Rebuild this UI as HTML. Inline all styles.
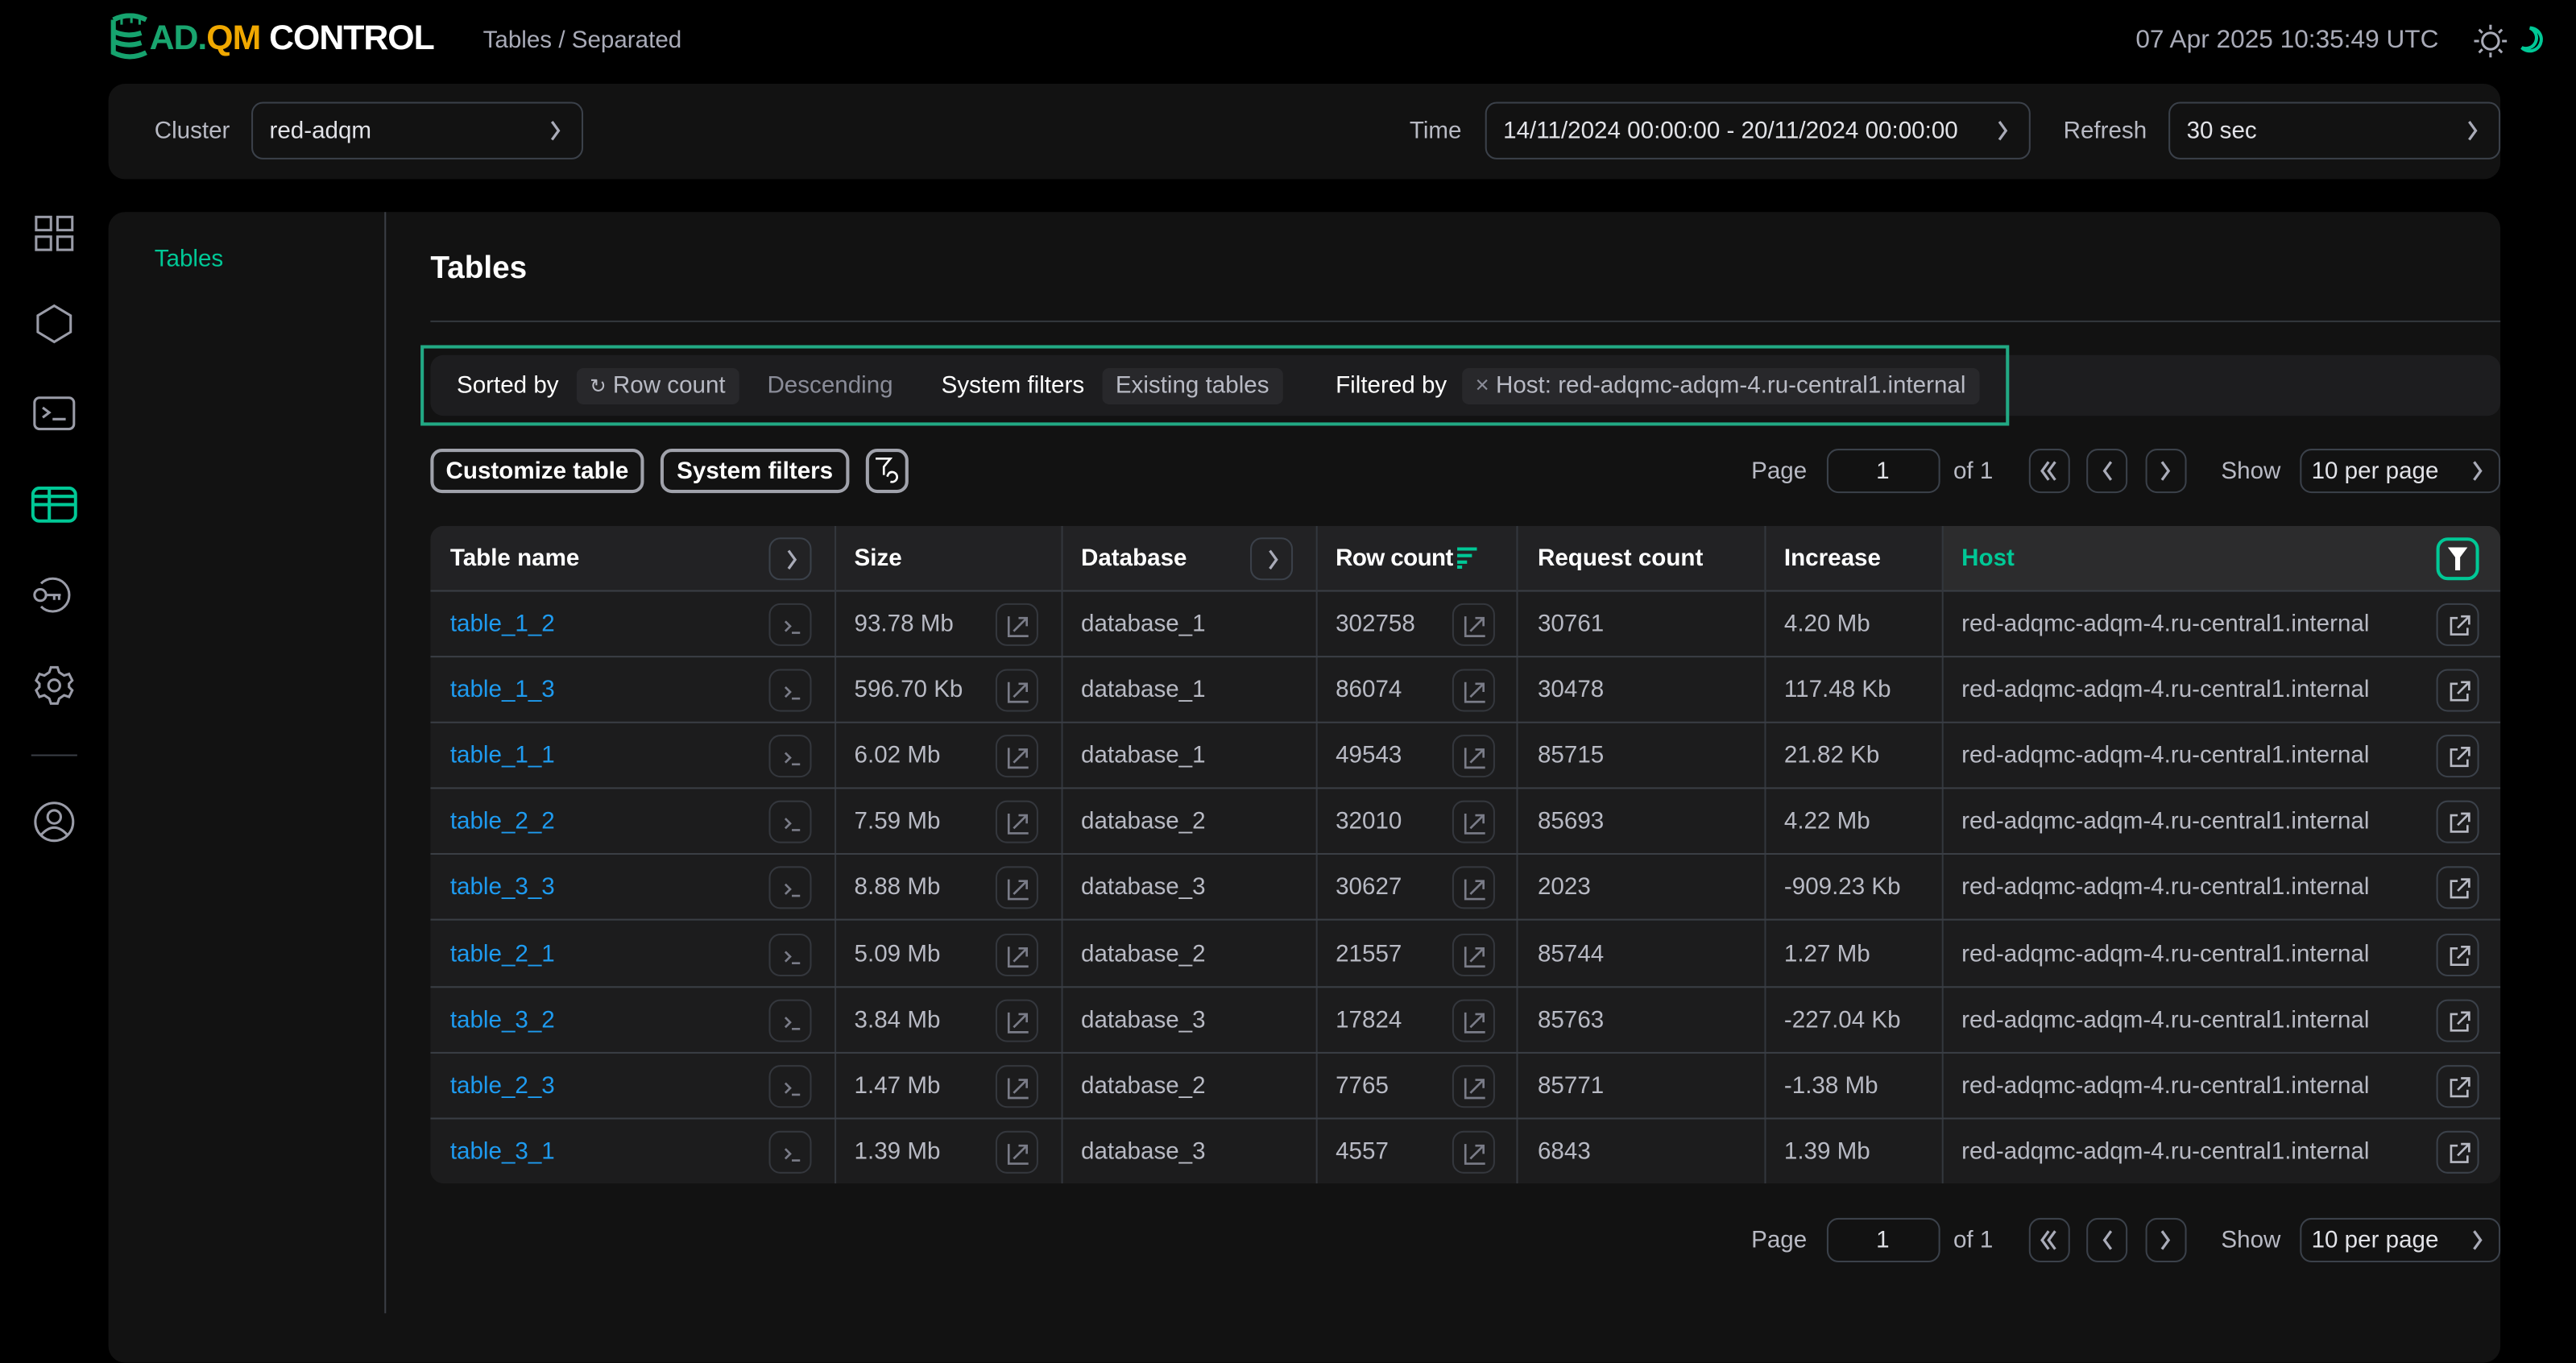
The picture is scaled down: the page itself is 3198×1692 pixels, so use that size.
<!DOCTYPE html>
<html><head><meta charset="utf-8"><style>
*{box-sizing:border-box;margin:0;padding:0}
html,body{width:3198px;height:1616px;overflow:hidden;background:#000}
#w{position:absolute;left:0;top:0;width:1568px;height:792px;transform:scale(2.0395,2.0404);transform-origin:0 0;font-family:"Liberation Sans",sans-serif;color:#b8bac4;font-size:14.5px}
.a{position:absolute}
.box{position:absolute;border:1.5px solid #3b414a;border-radius:7px}
.t{white-space:nowrap;position:absolute}
.chip{position:absolute;background:#28282b;border-radius:4px;height:22px;line-height:22px;padding:0 8px;white-space:nowrap}
.tb{position:absolute;left:262px;top:320px;width:1260px;height:400px;background:#1c1c1d;border-radius:8px;overflow:hidden}
.row{position:absolute;left:0;width:1260px;height:40px;border-bottom:1.5px solid #3a3e45}
.vl{position:absolute;top:0;width:1px;height:400px;background:#33373d}
.c{position:absolute;top:0;height:40px;line-height:40px;white-space:nowrap}
.ic{position:absolute;top:7px;width:26px;height:26px;border:1.5px solid #34373d;border-radius:7px}
svg{position:absolute}
svg.in{position:static;vertical-align:-2px;margin-left:3px}
</style></head><body><div id="w">
<svg style="left:66px;top:8px" width="26" height="28" viewBox="0 0 26 28" fill="none" stroke="#16a36e" stroke-width="3"><path d="M3 4q10-5 20 0M3 4v20q10 5 20 0M3 11q8 4 17 1M3 17q8 4 17 1"/><path d="M8 2v5M14 1v5M19 2v5" stroke-width="1.5"/></svg>
<div class="t" style="left:91px;top:12px;font-size:21px;font-weight:bold;letter-spacing:-0.5px"><span style="color:#19a56f">AD.</span><span style="color:#f0a800">QM</span><span style="color:#fff"> CONTROL</span></div>
<div class="t" style="left:294px;top:17px;color:#a9abb8;font-size:14.5px">Tables / Separated</div>
<div class="t" style="left:1300px;top:16px;color:#a9abb8;font-size:15.5px">07 Apr 2025 10:35:49 UTC</div>
<svg style="left:1506px;top:15px" width="20" height="20" viewBox="0 0 20 20" stroke="#a9abb8" stroke-width="1.5" fill="none"><circle cx="10" cy="10" r="5"/><path d="M10 0v3M10 17v3M0 10h3M17 10h3M3 3l2 2M15 15l2 2M3 17l2-2M15 5l2-2"/></svg>
<svg style="left:1532px;top:15px" width="18" height="20" viewBox="0 0 18 20" stroke="#00c896" stroke-width="2" fill="none"><path d="M8 2a7 7 0 1 1-5 12a6 6 0 0 0 5-12z"/></svg>
<div class="a" style="left:66px;top:51px;width:1456px;height:58px;background:#121212;border-radius:10px"></div>
<div class="t" style="left:94px;top:72px">Cluster</div>
<div class="box" style="left:153px;top:62px;width:202px;height:35px"></div>
<div class="t" style="left:164px;top:72px;color:#e2e3e8">red-adqm</div>
<svg style="left:334px;top:73px" width="8" height="13" viewBox="0 0 8 13" fill="none" stroke="#a9abb8" stroke-width="1.6"><path d="M2 1l4 5.5l-4 5.5"/></svg>
<div class="t" style="left:858px;top:72px">Time</div>
<div class="box" style="left:904px;top:62px;width:332px;height:35px"></div>
<div class="t" style="left:915px;top:72px;color:#e2e3e8">14/11/2024 00:00:00 - 20/11/2024 00:00:00</div>
<svg style="left:1215px;top:73px" width="8" height="13" viewBox="0 0 8 13" fill="none" stroke="#a9abb8" stroke-width="1.6"><path d="M2 1l4 5.5l-4 5.5"/></svg>
<div class="t" style="left:1256px;top:72px">Refresh</div>
<div class="box" style="left:1320px;top:62px;width:202px;height:35px"></div>
<div class="t" style="left:1331px;top:72px;color:#e2e3e8">30 sec</div>
<svg style="left:1501px;top:73px" width="8" height="13" viewBox="0 0 8 13" fill="none" stroke="#a9abb8" stroke-width="1.6"><path d="M2 1l4 5.5l-4 5.5"/></svg>
<svg style="left:21px;top:130px" width="24" height="24" viewBox="0 0 24 24" fill="none" stroke="#9a9ca8" stroke-width="1.5"><rect x="1" y="2" width="9" height="8"/><rect x="14" y="2" width="9" height="8"/><rect x="1" y="14" width="9" height="8"/><rect x="14" y="14" width="9" height="8"/></svg>
<svg style="left:21px;top:185px" width="24" height="24" viewBox="0 0 24 24" fill="none" stroke="#9a9ca8" stroke-width="1.5"><path d="M12 1l10 6v10l-10 6l-10-6v-10z"/></svg>
<svg style="left:20px;top:240px" width="26" height="24" viewBox="0 0 26 24" fill="none" stroke="#9a9ca8" stroke-width="1.5"><rect x="1" y="2" width="24" height="19" rx="3"/><path d="M6 8l4 3l-4 3M12 15h8"/></svg>
<svg style="left:19px;top:296px" width="28" height="22" viewBox="0 0 28 22" fill="none" stroke="#00c896" stroke-width="2"><rect x="1" y="1" width="26" height="20" rx="4"/><path d="M1 11h26M11 1v20M1 6h26"/></svg>
<svg style="left:19px;top:350px" width="28" height="24" viewBox="0 0 28 24" fill="none" stroke="#9a9ca8" stroke-width="1.5"><path d="M6 5a10 10 0 1 1 0 14"/><circle cx="5.5" cy="12" r="3.5"/><path d="M9 12h9M14 12v3M17 12v3"/></svg>
<svg style="left:20px;top:404px" width="26" height="26" viewBox="0 0 26 26" fill="none" stroke="#9a9ca8" stroke-width="1.5"><path d="M11 2h4l1 3l3 2l3-1l2 4l-2 2v2l2 2l-2 4l-3-1l-3 2l-1 3h-4l-1-3l-3-2l-3 1l-2-4l2-2v-2l-2-2l2-4l3 1l3-2z"/><circle cx="13" cy="13" r="3.5"/></svg>
<div class="a" style="left:19px;top:459px;width:28px;height:1px;background:#3a3e45"></div>
<svg style="left:20px;top:487px" width="26" height="26" viewBox="0 0 26 26" fill="none" stroke="#9a9ca8" stroke-width="1.5"><circle cx="13" cy="13" r="11.5"/><circle cx="13" cy="10" r="4"/><path d="M5 21q8-9 16 0"/></svg>
<div class="a" style="left:66px;top:129px;width:1456px;height:700px;background:#121212;border-radius:10px"></div>
<div class="a" style="left:234px;top:129px;width:1px;height:670px;background:#3a3e45"></div>
<div class="t" style="left:94px;top:150px;color:#00c896">Tables</div>
<div class="t" style="left:262px;top:153px;color:#fff;font-size:19px;font-weight:bold">Tables</div>
<div class="a" style="left:262px;top:195px;width:1260px;height:1px;background:#33373d"></div>
<div class="a" style="left:262px;top:216px;width:1260px;height:37px;background:#1d1d1f;border-radius:8px"></div>
<div class="a" style="left:256px;top:210px;width:967px;height:49px;border:2px solid #22a984"></div>
<div class="t" style="left:278px;top:227px;color:#fff">Sorted by</div>
<div class="chip" style="left:351px;top:224px;color:#b8bac4"><span style="font-size:12px">↻</span> Row count</div>
<div class="t" style="left:467px;top:227px;color:#8a8c98">Descending</div>
<div class="t" style="left:573px;top:227px;color:#fff">System filters</div>
<div class="chip" style="left:671px;top:224px">Existing tables</div>
<div class="t" style="left:813px;top:227px;color:#fff">Filtered by</div>
<div class="chip" style="left:890px;top:224px"><span style="color:#8a8c98">×</span> Host: red-adqmc-adqm-4.ru-central1.internal</div>
<div class="a" style="left:262px;top:273px;width:130px;height:27px;border:2px solid #a0a2ab;border-radius:7px;color:#fff;font-weight:bold;line-height:24px;text-align:center">Customize table</div>
<div class="a" style="left:402px;top:273px;width:115px;height:27px;border:2px solid #a0a2ab;border-radius:7px;color:#fff;font-weight:bold;line-height:24px;text-align:center">System filters</div>
<div class="a" style="left:527px;top:273px;width:26px;height:27px;border:2px solid #a0a2ab;border-radius:7px"></div>
<svg style="left:532px;top:278px" width="16" height="17" viewBox="0 0 16 17" fill="none" stroke="#fff" stroke-width="1.3"><path d="M1 1h9l-4 5v5M9 10a3 3 0 1 1 1 5M9 10l-1 2"/></svg>
<div id="pg"></div>
<div class="tb">
<div class="a" style="left:0;top:0;width:1260px;height:40px;background:#222224"></div>
<div class="a" style="left:920px;top:0;width:340px;height:40px;background:#2c2c2d"></div>
<div class="row" style="top:0"></div>
<div class="c" style="left:12px;color:#fff;font-weight:bold">Table name</div>
<div class="ic" style="left:206px;border-color:#3b414a"><svg style="left:9px;top:6px" width="8" height="13" viewBox="0 0 8 13" fill="none" stroke="#a9abb8" stroke-width="1.6"><path d="M2 1l4 5.5l-4 5.5"/></svg></div>
<div class="c" style="left:258px;color:#fff;font-weight:bold">Size</div>
<div class="c" style="left:396px;color:#fff;font-weight:bold">Database</div>
<div class="ic" style="left:499px;border-color:#3b414a"><svg style="left:9px;top:6px" width="8" height="13" viewBox="0 0 8 13" fill="none" stroke="#a9abb8" stroke-width="1.6"><path d="M2 1l4 5.5l-4 5.5"/></svg></div>
<div class="c" style="left:551px;color:#fff;font-weight:bold;letter-spacing:-0.3px">Row count<svg class="in" width="12" height="14" viewBox="0 0 12 14" stroke="#00c896" stroke-width="2"><path d="M0 2h12M0 6h9M0 10h6M0 13h3"/></svg></div>
<div class="c" style="left:674px;color:#fff;font-weight:bold">Request count</div>
<div class="c" style="left:824px;color:#fff;font-weight:bold">Increase</div>
<div class="c" style="left:932px;color:#00c896;font-weight:bold">Host</div>
<div class="ic" style="left:1221px;border:2px solid #00c896"></div>
<svg style="left:1228px;top:13px" width="12" height="14" viewBox="0 0 12 14" fill="#fff"><path d="M0 0h12l-4.5 6v8h-3v-8z"/></svg>
<div class="vl" style="left:246px"></div><div class="vl" style="left:384px"></div><div class="vl" style="left:539px"></div><div class="vl" style="left:661px"></div><div class="vl" style="left:812px"></div><div class="vl" style="left:920px"></div>
<div id="rows"></div>
</div>
</div>
<script>
var chev='<svg style="left:9px;top:6px" width="8" height="13" viewBox="0 0 8 13" fill="none" stroke="#a9abb8" stroke-width="1.6"><path d="M2 1l4 5.5l-4 5.5"/></svg>';
var chl='<svg style="left:8px;top:6px" width="8" height="13" viewBox="0 0 8 13" fill="none" stroke="#a9abb8" stroke-width="1.6"><path d="M6 1l-4 5.5l4 5.5"/></svg>';
var dbl='<svg style="left:5px;top:6px" width="12" height="13" viewBox="0 0 12 13" fill="none" stroke="#a9abb8" stroke-width="1.6"><path d="M6 1l-4 5.5l4 5.5M10 1l-4 5.5l4 5.5"/></svg>';
function pg(y){return '<div class="t" style="left:1066px;top:'+(y+6)+'px">Page</div><div class="box" style="left:1112px;top:'+y+'px;width:69px;height:27px"></div><div class="t" style="left:1142px;top:'+(y+6)+'px;color:#e2e3e8">1</div><div class="t" style="left:1189px;top:'+(y+6)+'px">of 1</div><div class="box" style="left:1235px;top:'+y+'px;width:25px;height:27px">'+dbl+'</div><div class="box" style="left:1270px;top:'+y+'px;width:25px;height:27px">'+chl+'</div><div class="box" style="left:1306px;top:'+y+'px;width:25px;height:27px">'+chev.replace('left:9px','left:7px')+'</div><div class="t" style="left:1352px;top:'+(y+6)+'px">Show</div><div class="box" style="left:1400px;top:'+y+'px;width:122px;height:27px">'+chev.replace('left:9px','left:103px')+'</div><div class="t" style="left:1407px;top:'+(y+6)+'px;color:#e2e3e8">10 per page</div>';}
document.getElementById("pg").innerHTML=pg(273)+pg(741);
var d=[["table_1_2","93.78 Mb","database_1","302758","30761","4.20 Mb"],["table_1_3","596.70 Kb","database_1","86074","30478","117.48 Kb"],["table_1_1","6.02 Mb","database_1","49543","85715","21.82 Kb"],["table_2_2","7.59 Mb","database_2","32010","85693","4.22 Mb"],["table_3_3","8.88 Mb","database_3","30627","2023","-909.23 Kb"],["table_2_1","5.09 Mb","database_2","21557","85744","1.27 Mb"],["table_3_2","3.84 Mb","database_3","17824","85763","-227.04 Kb"],["table_2_3","1.47 Mb","database_2","7765","85771","-1.38 Mb"],["table_3_1","1.39 Mb","database_3","4557","6843","1.39 Mb"]];
var h="";
var tr='<svg style="left:7px;top:7px" width="12" height="12" viewBox="0 0 12 12" fill="none" stroke="#7a7c88" stroke-width="1.3"><path d="M2 3l3 3l-3 3M6 10h5"/></svg>';
var ch='<svg style="left:6px;top:6px" width="14" height="14" viewBox="0 0 14 14" fill="none" stroke="#7a7c88" stroke-width="1.3"><path d="M1 1v12h12M4 10l8-8M7 2h5v5"/></svg>';
var ex='<svg style="left:6px;top:6px" width="14" height="14" viewBox="0 0 14 14" fill="none" stroke="#b8bac4" stroke-width="1.3"><path d="M6 2H2v10h10V8M8 1h5v5M13 1L6 8"/></svg>';
d.forEach(function(r,i){var y=40+i*40.1;var b=i<8?'':'border:none;';
h+='<div class="row" style="top:'+y+'px;'+b+'">'+
'<div class="c" style="left:12px;color:#1e9bf0">'+r[0]+'</div><div class="ic" style="left:206px">'+tr+'</div>'+
'<div class="c" style="left:258px">'+r[1]+'</div><div class="ic" style="left:344px">'+ch+'</div>'+
'<div class="c" style="left:396px">'+r[2]+'</div>'+
'<div class="c" style="left:551px">'+r[3]+'</div><div class="ic" style="left:622px">'+ch+'</div>'+
'<div class="c" style="left:674px">'+r[4]+'</div>'+
'<div class="c" style="left:824px">'+r[5]+'</div>'+
'<div class="c" style="left:932px">red-adqmc-adqm-4.ru-central1.internal</div><div class="ic" style="left:1221px;border-color:#3b414a">'+ex+'</div></div>';});
document.getElementById("rows").innerHTML=h;
</script>
</body></html>
